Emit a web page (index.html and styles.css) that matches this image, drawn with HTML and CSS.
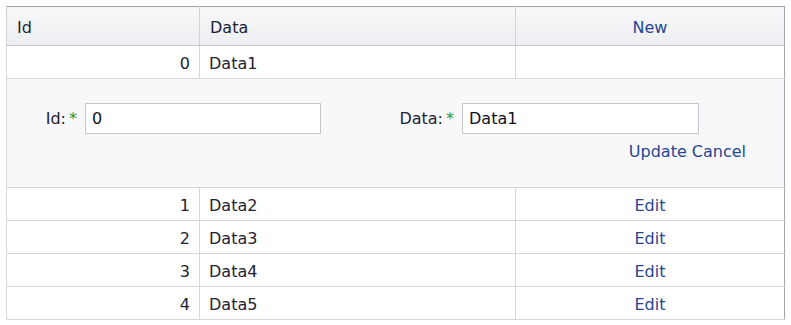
FILE: index.html
```html
<!DOCTYPE html>
<html>
<head>
<meta charset="utf-8">
<link rel="stylesheet" href="styles.css">
</head>
<body>
<table class="grid">
  <colgroup>
    <col class="c-id">
    <col class="c-data">
    <col class="c-cmd">
  </colgroup>
  <thead>
    <tr>
      <th class="left">Id</th>
      <th class="left">Data</th>
      <th class="center"><a class="link">New</a></th>
    </tr>
  </thead>
  <tbody>
    <tr>
      <td class="num">0</td>
      <td>Data1</td>
      <td class="center"></td>
    </tr>
    <tr class="edit-row">
      <td colspan="3">
        <div class="edit-form">
          <label class="lbl lbl-id">Id:<span class="req">*</span></label>
          <input class="inp" type="text" value="0">
          <label class="lbl lbl-data">Data:<span class="req">*</span></label>
          <input class="inp" type="text" value="Data1">
        </div>
        <div class="actions"><a class="link">Update</a> <a class="link">Cancel</a></div>
      </td>
    </tr>
    <tr>
      <td class="num">1</td>
      <td>Data2</td>
      <td class="center"><a class="link">Edit</a></td>
    </tr>
    <tr>
      <td class="num">2</td>
      <td>Data3</td>
      <td class="center"><a class="link">Edit</a></td>
    </tr>
    <tr>
      <td class="num">3</td>
      <td>Data4</td>
      <td class="center"><a class="link">Edit</a></td>
    </tr>
    <tr>
      <td class="num">4</td>
      <td>Data5</td>
      <td class="center"><a class="link">Edit</a></td>
    </tr>
  </tbody>
</table>
</body>
</html>
```

FILE: styles.css
```css
html, body {
  margin: 0;
  background: #ffffff;
}
body {
  padding: 6px;
  font-family: "DejaVu Sans", Verdana, sans-serif;
  font-size: 16px;
  color: #222233;
}
.grid {
  width: 778px;
  border-collapse: collapse;
  table-layout: fixed;
  border: 1px solid #a4a4ae;
}
.c-id { width: 193px; }
.c-data { width: 316px; }
.c-cmd { width: 269px; }
th {
  font-weight: normal;
  height: 36px;
  padding: 2px 9px 0 9px;
  line-height: 19px;
  background: linear-gradient(#f8f8f9, #eceef1);
  border-left: 1px solid #d2d2d8;
  border-bottom: 1px solid #c4c4cc;
  vertical-align: middle;
}
td {
  height: 30px;
  padding: 2px 9px 0 9px;
  line-height: 19px;
  border-left: 1px solid #d6d6dc;
  border-bottom: 1px solid #d6d6dc;
  vertical-align: middle;
  background: #ffffff;
}
.left { text-align: left; padding-left: 10px; }
.center { text-align: center; }
.num { text-align: right; }
.link {
  color: #26468f;
  text-decoration: none;
}
.edit-row td {
  background: #f8f8fa;
  height: auto;
  padding: 24px 0 26px 0;
}
.edit-form {
  display: grid;
  grid-template-columns: 78px 236px 141px 237px;
  align-items: center;
}
.lbl {
  text-align: right;
  padding-right: 8px;
  font-family: "DejaVu Sans", Verdana, sans-serif;
}
.req {
  color: #2f9a3a;
  margin-left: 3px;
}
.inp {
  box-sizing: border-box;
  height: 31px;
  margin: 0;
  padding: 0 6px;
  border: 1px solid #c6c6cc;
  background: #ffffff;
  font-family: "DejaVu Sans", Verdana, sans-serif;
  font-size: 16px;
  color: #111122;
  outline: none;
}
.actions {
  display: flex;
  justify-content: flex-end;
  gap: 5px;
  padding-right: 38px;
  margin-top: 8px;
  line-height: 19px;
}
```
